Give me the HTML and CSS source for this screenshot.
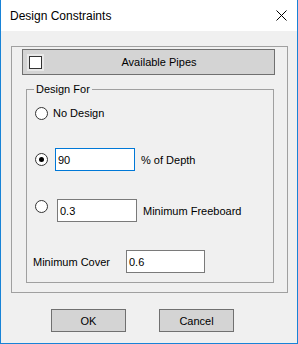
FILE: index.html
```html
<!DOCTYPE html>
<html>
<head>
<meta charset="utf-8">
<link rel="stylesheet" href="styles.css">
</head>
<body>
<div class="window">
  <div class="titlebar">
    <span class="title">Design Constraints</span>
    <svg class="close" width="11" height="11" viewBox="0 0 11 11"><path d="M0.5 0.5 L10.5 10.5 M10.5 0.5 L0.5 10.5" stroke="#000" stroke-width="1" fill="none"/></svg>
  </div>
  <div class="content">
    <div class="outer">
      <div class="pipes-btn">
        <span class="chk-wrap"><span class="chk"></span></span>
        <span class="pipes-label">Available Pipes</span>
      </div>
      <div class="group">
        <span class="legend">Design For</span>
        <div class="row row1">
          <span class="radio"></span>
          <span class="lbl nodesign">No Design</span>
        </div>
        <div class="row row2">
          <span class="radio checked"></span>
          <span class="input focused">90</span>
          <span class="lbl after">% of Depth</span>
        </div>
        <div class="row row3">
          <span class="radio up"></span>
          <span class="input inp3">0.3</span>
          <span class="lbl after">Minimum Freeboard</span>
        </div>
        <div class="row row4">
          <span class="lbl cover">Minimum Cover</span>
          <span class="input inp4">0.6</span>
        </div>
      </div>
    </div>
    <div class="buttons">
      <span class="btn">OK</span>
      <span class="btn">Cancel</span>
    </div>
  </div>
</div>
</body>
</html>
```
FILE: styles.css
```css
html, body {
  margin: 0;
  padding: 0;
  background: #f0f0f0;
}
body {
  width: 298px;
  height: 344px;
  font-family: "Liberation Sans", Arial, sans-serif;
  font-size: 11px;
  color: #000;
}
.window {
  box-sizing: border-box;
  width: 298px;
  height: 344px;
  border-left: 1px solid #1883d7;
  border-right: 1px solid #1883d7;
  border-bottom: 1px solid #1883d7;
  background: #f0f0f0;
  display: flex;
  flex-direction: column;
}
.titlebar {
  height: 31px;
  background: #fff;
  display: flex;
  align-items: center;
  justify-content: space-between;
  padding: 0 10px 0 9px;
  flex: none;
}
.title {
  font-size: 12px;
  margin-top: 1px;
}
.close {
  display: block;
}
.content {
  flex: 1;
  padding: 15px 9px 0 10px;
}
.outer {
  box-sizing: border-box;
  height: 247px;
  border: 1px solid #a0a0a0;
  padding: 2px 12px 0 10px;
}
.pipes-btn {
  box-sizing: border-box;
  height: 26px;
  border: 1px solid #707070;
  background: #d4d4d4;
  display: flex;
  align-items: center;
  padding-left: 4px;
}
.chk-wrap {
  width: 17px;
  height: 17px;
  background: #e8e8e8;
  display: flex;
  align-items: center;
  justify-content: center;
  flex: none;
}
.chk {
  box-sizing: border-box;
  width: 13px;
  height: 13px;
  border: 1px solid #333;
  background: #fff;
}
.pipes-label {
  flex: 1;
  text-align: center;
}
.group {
  position: relative;
  box-sizing: border-box;
  margin: 14px 1px 0 4px;
  height: 194px;
  border: 1px solid #a0a0a0;
  padding: 12px 0 0 0;
}
.legend {
  position: absolute;
  top: -8px;
  left: 7px;
  padding: 0 2px;
  background: #f0f0f0;
  line-height: 14px;
}
.row {
  display: flex;
  align-items: center;
  height: 23px;
}
.row1 {
  height: 22px;
  padding-left: 8px;
}
.row2 {
  margin-top: 24px;
  padding-left: 8px;
}
.row3 {
  margin-top: 28px;
  padding-left: 8px;
}
.row4 {
  margin-top: 28px;
  padding-left: 6px;
}
.radio {
  box-sizing: border-box;
  width: 13px;
  height: 13px;
  border: 1px solid #333;
  border-radius: 50%;
  background: #fff;
  flex: none;
  display: flex;
  align-items: center;
  justify-content: center;
}
.radio.checked::after {
  content: "";
  width: 5px;
  height: 5px;
  border-radius: 50%;
  background: #000;
}
.radio.up {
  align-self: flex-start;
  margin-top: 1px;
}
.lbl {
  white-space: nowrap;
}
.nodesign {
  margin-left: 5px;
}
.input {
  box-sizing: border-box;
  width: 80px;
  height: 23px;
  border: 1px solid #7a7a7a;
  background: #fff;
  padding-left: 2px;
  display: flex;
  align-items: center;
  flex: none;
}
.input.focused {
  border-color: #0078d7;
  margin-left: 7px;
}
.inp3 {
  margin-left: 9px;
}
.after {
  margin-left: 6px;
}
.inp4 {
  width: 79px;
}
.cover {
  width: 93px;
  flex: none;
}
.buttons {
  display: flex;
  gap: 33px;
  padding: 16px 0 0 40px;
}
.btn {
  box-sizing: border-box;
  width: 75px;
  height: 23px;
  border: 1px solid #707070;
  background: #d4d4d4;
  display: flex;
  align-items: center;
  justify-content: center;
}
```
